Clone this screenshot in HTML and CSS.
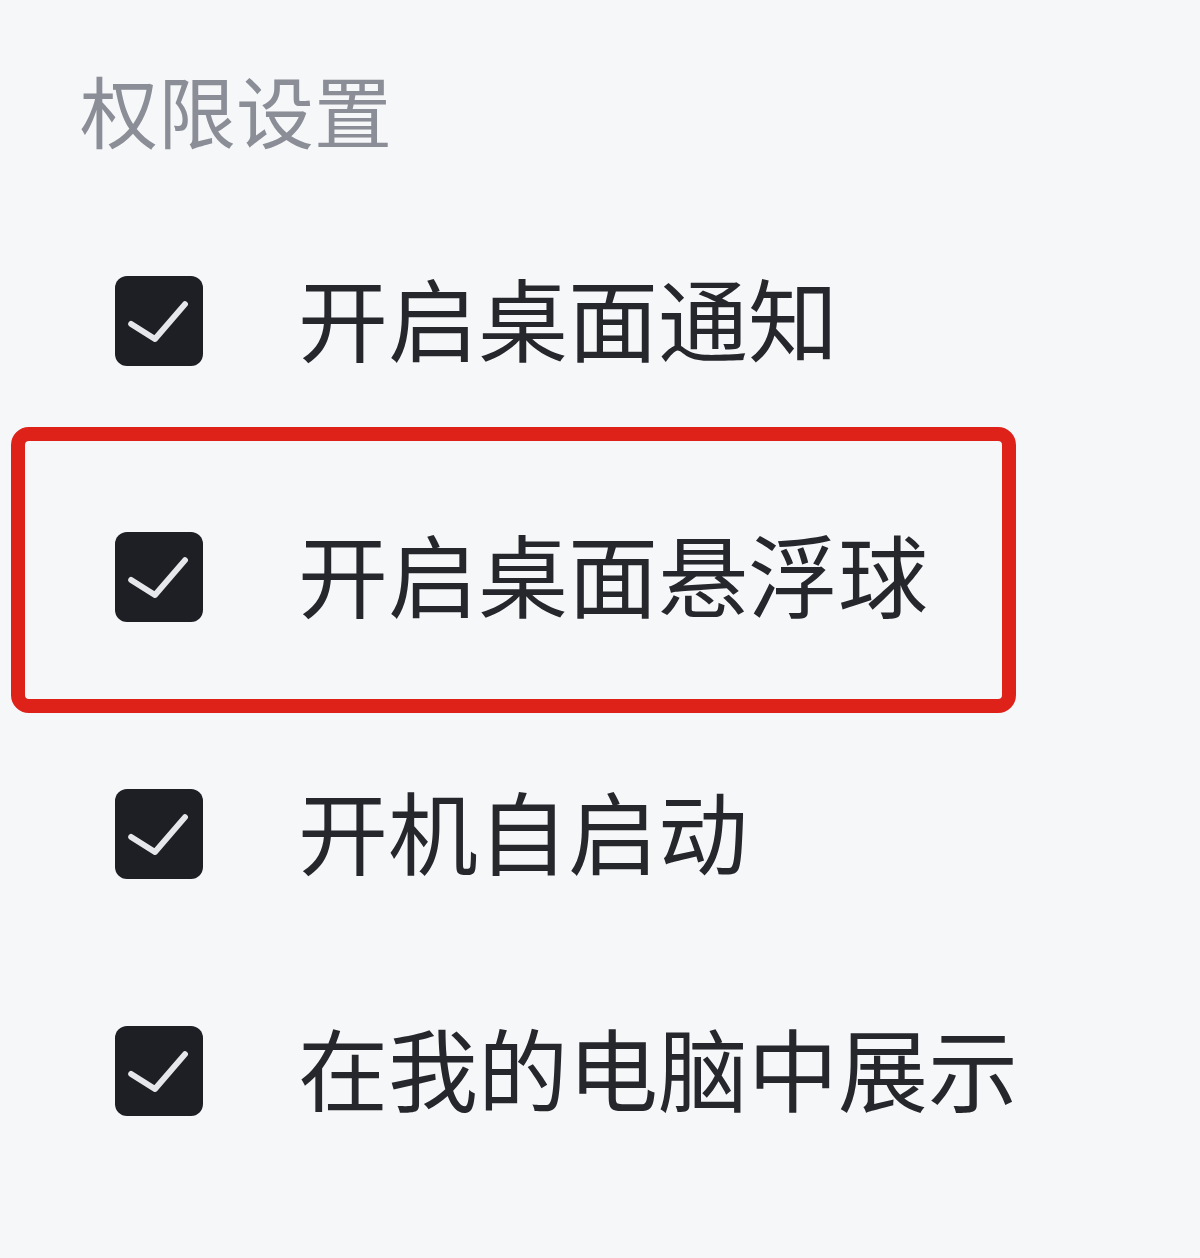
FILE: index.html
```html
<!DOCTYPE html>
<html lang="zh-CN">
<head>
    <meta charset="UTF-8">
    <meta name="viewport" content="width=device-width, initial-scale=1.0">
    <title>权限设置</title>
    <link rel="stylesheet" href="styles.css">
</head>
<body>
    <div class="panel">
        <h2 class="panel-title">权限设置</h2>
        <ul class="perm-list">
            <li class="perm-row">
                <span class="check"><svg viewBox="0 0 24 24"><path d="M4.4 12.8L10.9 16.9L19.1 7.4"/></svg></span>
                <span class="perm-label">开启桌面通知</span>
            </li>
            <li class="perm-row perm-row--marked">
                <span class="check"><svg viewBox="0 0 24 24"><path d="M4.4 12.8L10.9 16.9L19.1 7.4"/></svg></span>
                <span class="perm-label">开启桌面悬浮球</span>
            </li>
            <li class="perm-row perm-row--third">
                <span class="check"><svg viewBox="0 0 24 24"><path d="M4.4 12.8L10.9 16.9L19.1 7.4"/></svg></span>
                <span class="perm-label">开机自启动</span>
            </li>
            <li class="perm-row perm-row--last">
                <span class="check"><svg viewBox="0 0 24 24"><path d="M4.4 12.8L10.9 16.9L19.1 7.4"/></svg></span>
                <span class="perm-label">在我的电脑中展示</span>
            </li>
        </ul>
    </div>
</body>
</html>
```

FILE: styles.css
```css
html, body {margin: 0; padding: 0; background: #f6f7f9;}
body {font-family: "Noto Sans CJK SC", "Noto Sans", sans-serif; min-height: 1258px;}
.panel {padding: 62px 0 0 0;}
.panel-title {margin: 0 0 0 80px; font-size: 78px; line-height: 94px; font-weight: 400; color: #8b8e96;}
.perm-list {list-style: none; margin: 94px 0 0 11px; padding: 0; width: 1005px;}
.perm-row {display: flex; align-items: center; box-sizing: border-box; height: 142px; padding-left: 90px; border: 14px solid transparent; border-radius: 18px;}
.perm-row--marked {margin-top: 35px; height: 286px; padding-top: 14px; border-color: #de2119;}
.perm-row--third {margin-top: 50px;}
.perm-row--last {margin-top: 95px;}
.check {display: flex; width: 88px; height: 90px; border-radius: 12px; background: #1e1f25; flex-shrink: 0;}
.check svg {width: 88px; height: 90px; fill: none; stroke: #e6e7ea; stroke-width: 1.6; stroke-linecap: round; stroke-linejoin: round;}
.perm-label {margin-left: 95px; padding-bottom: 10px; font-size: 90px; line-height: 1; color: #26272c; white-space: nowrap;}
```
